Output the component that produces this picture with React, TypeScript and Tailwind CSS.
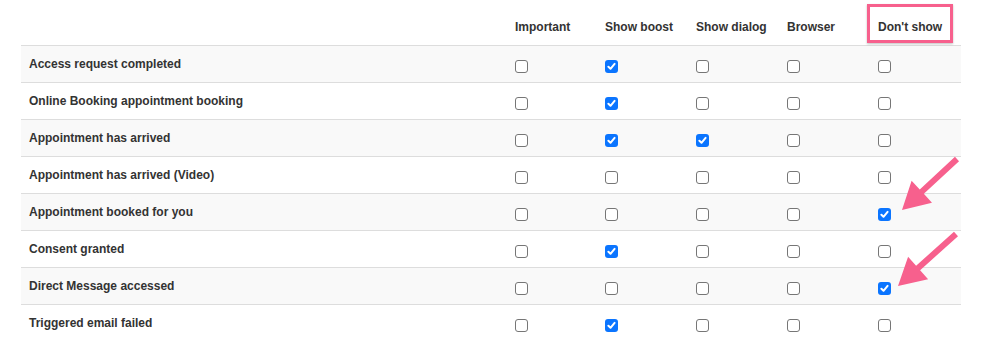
// @ts-nocheck
const columns = ["Important", "Show boost", "Show dialog", "Browser", "Don't show"];

const rows = [
  { name: "Access request completed", checked: [false, true, false, false, false] },
  { name: "Online Booking appointment booking", checked: [false, true, false, false, false] },
  { name: "Appointment has arrived", checked: [false, true, true, false, false] },
  { name: "Appointment has arrived (Video)", checked: [false, false, false, false, false] },
  { name: "Appointment booked for you", checked: [false, false, false, false, true] },
  { name: "Consent granted", checked: [false, true, false, false, false] },
  { name: "Direct Message accessed", checked: [false, false, false, false, true] },
  { name: "Triggered email failed", checked: [false, true, false, false, false] },
];

function Checkbox({ checked }) {
  if (checked) {
    return (
      <span className="mt-[4px] flex h-[13px] w-[13px] items-center justify-center rounded-[3px] bg-[#0b75ff]">
        <svg width="9" height="9" viewBox="0 0 9 9">
          <path d="M1.4 4.8 L3.5 6.8 L7.6 1.9" fill="none" stroke="white" strokeWidth="2" strokeLinecap="round" strokeLinejoin="round" />
        </svg>
      </span>
    );
  }
  return <span className="mt-[4px] block h-[13px] w-[13px] rounded-[3px] border border-[#767676] bg-white" />;
}

function Arrow({ tail, tip }) {
  const dx = tip[0] - tail[0];
  const dy = tip[1] - tail[1];
  const len = Math.hypot(dx, dy);
  const ux = dx / len;
  const uy = dy / len;
  const nx = -uy;
  const ny = ux;
  const head = 27;
  const half = 15;
  const shaft = 3;
  const bx = tip[0] - head * ux;
  const by = tip[1] - head * uy;
  const pts = [
    [tail[0] + shaft * nx, tail[1] + shaft * ny],
    [bx + shaft * nx, by + shaft * ny],
    [bx + half * nx, by + half * ny],
    tip,
    [bx - half * nx, by - half * ny],
    [bx - shaft * nx, by - shaft * ny],
    [tail[0] - shaft * nx, tail[1] - shaft * ny],
  ];
  return <polygon points={pts.map((p) => p.join(",")).join(" ")} fill="#f7608d" strokeLinejoin="round" />;
}

export default function App() {
  return (
    <div className="relative h-[339px] w-[995px] overflow-hidden bg-white font-['Liberation_Sans',Arial,sans-serif] text-[12px] font-bold text-[#333]">
      <div className="ml-[21px] w-[940px]">
        <div className="grid h-[45px] grid-cols-[486px_90px_91px_91px_91px_91px]">
          <div />
          {columns.map((col, i) => (
            <div key={col} className="relative flex items-center pl-2 pt-2">
              {col}
              {i === 4 && (
                <span className="absolute left-[-3px] top-[4px] h-[39px] w-[86px] border-[3px] border-[#f7608d] shadow-[0_1px_2px_rgba(0,0,0,0.25)]" />
              )}
            </div>
          ))}
        </div>

        {rows.map((row, r) => (
          <div
            key={row.name}
            className={`grid h-[37px] grid-cols-[486px_90px_91px_91px_91px_91px] border-t border-[#dddddd] ${r % 2 === 0 ? "bg-[#f9f9f9]" : "bg-white"}`}
          >
            <div className="flex items-center pl-2">{row.name}</div>
            {row.checked.map((c, i) => (
              <div key={i} className="flex items-center pl-2">
                <Checkbox checked={c} />
              </div>
            ))}
          </div>
        ))}
      </div>

      <svg className="pointer-events-none absolute left-0 top-0" width="995" height="339">
        <Arrow tail={[957, 159]} tip={[902, 210]} />
        <Arrow tail={[956, 234]} tip={[898, 286]} />
      </svg>
    </div>
  );
}
